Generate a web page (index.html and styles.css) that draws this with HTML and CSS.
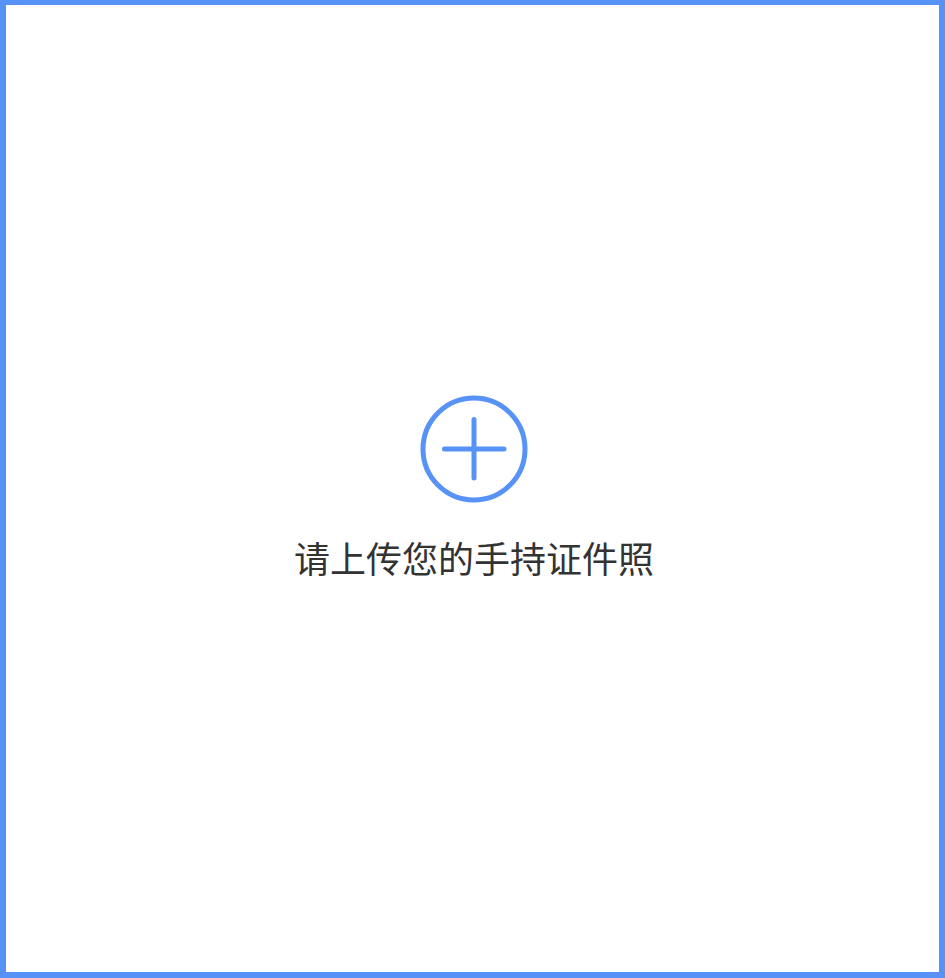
FILE: index.html
```html
<!DOCTYPE html>
<html lang="zh-CN">
<head>
<meta charset="utf-8">
<link rel="stylesheet" href="styles.css">
</head>
<body>
<div class="upload">
  <div class="upload-inner">
    <svg class="plus-icon" width="108" height="108" viewBox="0 0 108 108">
      <circle cx="54" cy="54" r="51" fill="none" stroke="#5792F7" stroke-width="5"/>
      <path d="M24.5 54 H84 M54 24.5 V83" stroke="#5792F7" stroke-width="5" stroke-linecap="round" fill="none"/>
    </svg>
    <div class="upload-text">请上传您的手持证件照</div>
  </div>
</div>
</body>
</html>
```
FILE: styles.css
```css
html, body {
  margin: 0;
  padding: 0;
  background: #ffffff;
}
.upload {
  box-sizing: border-box;
  width: 945px;
  height: 978px;
  border: 6px solid #5792F7;
  border-top-width: 5px;
  padding-left: 3px;
  padding-bottom: 6px;
  display: flex;
  align-items: center;
  justify-content: center;
}
.upload-inner {
  display: flex;
  flex-direction: column;
  align-items: center;
  gap: 34px;
}
.plus-icon {
  display: block;
}
.upload-text {
  font-family: "Noto Sans CJK SC", "Noto Sans", sans-serif;
  font-size: 36px;
  line-height: 40px;
  color: #333333;
}
```
